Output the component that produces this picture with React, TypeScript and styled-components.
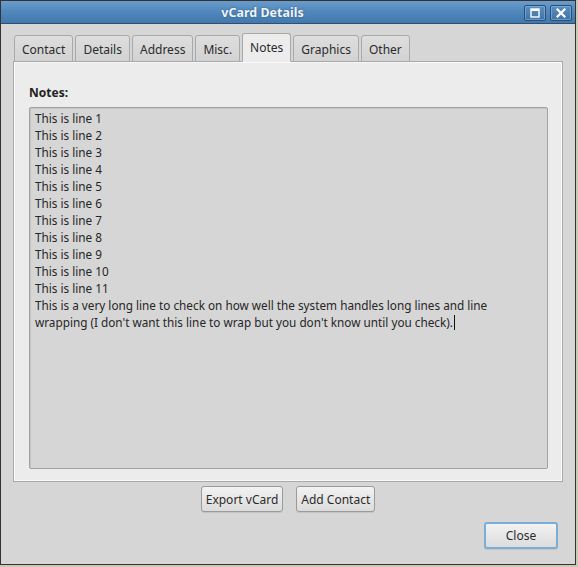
import React, { FC } from 'react';
import styled, { createGlobalStyle } from 'styled-components';

const GlobalStyle = createGlobalStyle`
  html, body {
    margin: 0;
    padding: 0;
    background: #c9c9b4;
  }
  body {
    font-family: "Noto Sans", "DejaVu Sans", sans-serif;
    font-size: 12px;
    color: #2b2b2b;
  }
`;

const tabs = ['Contact', 'Details', 'Address', 'Misc.', 'Notes', 'Graphics', 'Other'];

const noteLines = [
  'This is line 1',
  'This is line 2',
  'This is line 3',
  'This is line 4',
  'This is line 5',
  'This is line 6',
  'This is line 7',
  'This is line 8',
  'This is line 9',
  'This is line 10',
  'This is line 11',
];

const longLine =
  "This is a very long line to check on how well the system handles long lines and line wrapping (I don't want this line to wrap but you don't know until you check).";

const MaximizeIcon: FC = () => (
  <svg width="10" height="10" viewBox="0 0 10 10">
    <rect x="1" y="1" width="8" height="8" fill="none" stroke="#fff" strokeWidth="1.4" />
    <line x1="1" y1="2" x2="9" y2="2" stroke="#fff" strokeWidth="2" />
  </svg>
);

const CloseIcon: FC = () => (
  <svg width="10" height="10" viewBox="0 0 10 10">
    <path d="M1.5 1.5 L8.5 8.5 M8.5 1.5 L1.5 8.5" stroke="#fff" strokeWidth="2.2" strokeLinecap="square" />
  </svg>
);

const App: FC = () => {
  return (
    <>
      <GlobalStyle />
      <Window>
        <TitleBar>
          <Title>vCard Details</Title>
          <TitleButtons>
            <TitleButton>
              <MaximizeIcon />
            </TitleButton>
            <TitleButton>
              <CloseIcon />
            </TitleButton>
          </TitleButtons>
        </TitleBar>
        <Body>
          <TabBar>
            {tabs.map(tab => (
              <Tab key={tab} active={tab === 'Notes'}>
                {tab}
              </Tab>
            ))}
          </TabBar>
          <Panel>
            <Label>Notes:</Label>
            <NotesBox>
              {noteLines.map(line => (
                <Line key={line}>{line}</Line>
              ))}
              <Line>
                {longLine}
                <Caret />
              </Line>
            </NotesBox>
          </Panel>
          <ActionRow>
            <Button>Export vCard</Button>
            <Button>Add Contact</Button>
          </ActionRow>
          <Footer>
            <CloseButton>Close</CloseButton>
          </Footer>
        </Body>
      </Window>
    </>
  );
};

export default App;

const Window = styled.div`
  width: 574px;
  height: 563px;
  border: 1px solid #333331;
  display: flex;
  flex-direction: column;
  background: #d6d6d6;
`;

const TitleBar = styled.div`
  height: 22px;
  flex-shrink: 0;
  display: flex;
  align-items: center;
  padding-right: 3px;
  background: linear-gradient(to bottom, #6a9ccb 0%, #5289bd 45%, #4178ad 100%);
  border-bottom: 1px solid #2e4f70;
`;

const Title = styled.div`
  flex: 1;
  text-align: center;
  font-family: "Noto Sans", "DejaVu Sans", sans-serif;
  font-weight: bold;
  font-size: 12.5px;
  color: #eef3f8;
  text-shadow: 0 0 2px rgba(20, 50, 80, 0.6);
`;

const TitleButtons = styled.div`
  display: flex;
  gap: 4px;
  margin-top: 2px;
`;

const TitleButton = styled.div`
  width: 22px;
  height: 16px;
  box-sizing: border-box;
  border: 1px solid #2c4e72;
  border-radius: 2px;
  background: linear-gradient(to bottom, #5b8fc1, #3e73a8);
  box-shadow: inset 0 0 0 1px rgba(160, 200, 235, 0.45);
  display: flex;
  align-items: center;
  justify-content: center;
`;

const Body = styled.div`
  flex: 1;
  display: flex;
  flex-direction: column;
  padding: 9px 12px 0 12px;
`;

const TabBar = styled.div`
  display: flex;
  align-items: flex-end;
  gap: 2px;
  height: 29px;
  padding-left: 1px;
  margin-bottom: -1px;
  position: relative;
  z-index: 1;
`;

const Tab = styled.div<{ active?: boolean }>`
  box-sizing: border-box;
  height: ${p => (p.active ? '29px' : '27px')};
  padding: 0 7px;
  display: flex;
  align-items: center;
  justify-content: center;
  padding-top: ${p => (p.active ? '0' : '1px')};
  border: 1px solid #a9a9a9;
  border-bottom: ${p => (p.active ? '1px solid #ececec' : '1px solid #a9a9a9')};
  border-radius: 3px 3px 0 0;
  background: ${p => (p.active ? '#ececec' : 'linear-gradient(to bottom, #dedede, #d2d2d2)')};
  color: #2b2b2b;
  font-size: 12px;
`;

const Panel = styled.div`
  width: 550px;
  height: 421px;
  box-sizing: border-box;
  border: 1px solid #a9a9a9;
  box-shadow: inset 0 0 0 1px #f8f8f8;
  background: #ececec;
  padding: 22px 14px 12px 15px;
  display: flex;
  flex-direction: column;
`;

const Label = styled.div`
  font-weight: bold;
  font-size: 12px;
  color: #222;
  height: 23px;
`;

const NotesBox = styled.div`
  flex: 1;
  box-sizing: border-box;
  border: 1px solid #a2a2a2;
  border-radius: 2px;
  background: #d6d6d6;
  padding: 2px 5px;
  box-shadow: inset 1px 1px 0 #c4c4c4;
`;

const Line = styled.div`
  font-size: 11.75px;
  line-height: 17px;
  color: #262626;
`;

const Caret = styled.span`
  display: inline-block;
  width: 1px;
  height: 15px;
  background: #111;
  vertical-align: -3px;
  margin-left: 1px;
`;

const ActionRow = styled.div`
  display: flex;
  justify-content: center;
  gap: 13px;
  padding-top: 4px;
`;

const Button = styled.div`
  box-sizing: border-box;
  height: 26px;
  padding: 0 4px;
  display: flex;
  align-items: center;
  border: 1px solid #9a9a9a;
  border-radius: 3px;
  background: linear-gradient(to bottom, #f2f2f2, #dcdcdc);
  box-shadow: 0 1px 0 rgba(0, 0, 0, 0.08);
  font-size: 12px;
  color: #2b2b2b;
`;

const Footer = styled.div`
  display: flex;
  justify-content: flex-end;
  padding-top: 10px;
  padding-right: 5px;
`;

const CloseButton = styled(Button)`
  width: 74px;
  height: 27px;
  justify-content: center;
  border: 2px solid #7aaed6;
`;
